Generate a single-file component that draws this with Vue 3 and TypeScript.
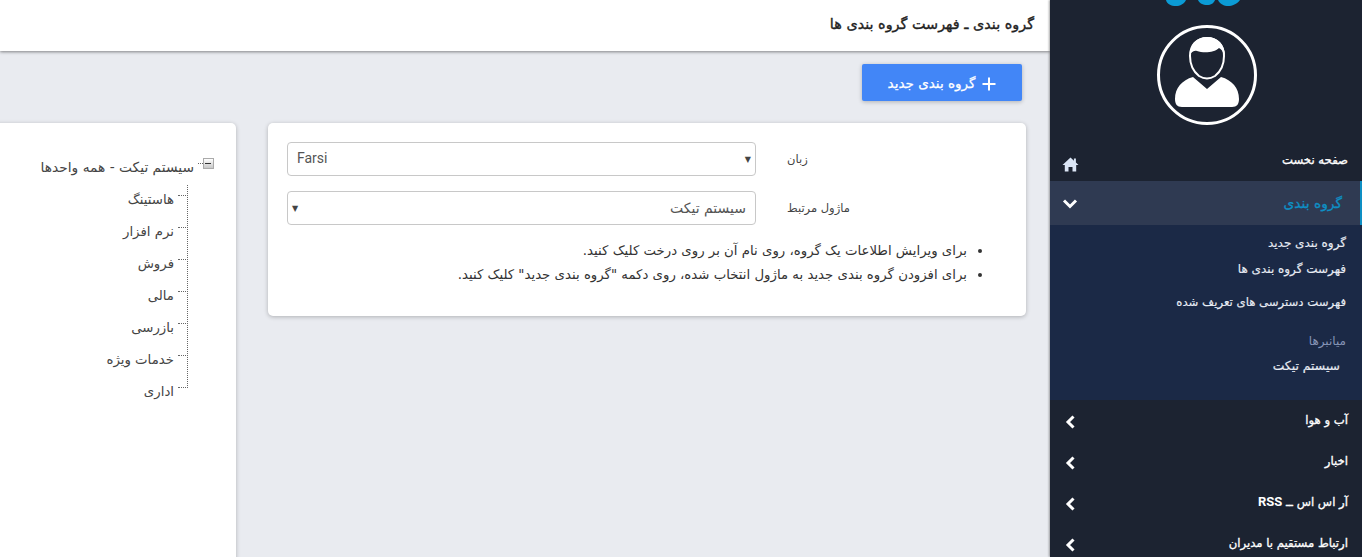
<script setup lang="ts">
const bullets = [
  'برای ویرایش اطلاعات یک گروه، روی نام آن بر روی درخت کلیک کنید.',
  'برای افزودن گروه بندی جدید به ماژول انتخاب شده، روی دکمه "گروه بندی جدید" کلیک کنید.'
]
const units = ['هاستینگ', 'نرم افزار', 'فروش', 'مالی', 'بازرسی', 'خدمات ویژه', 'اداری']
const menus = [
  { text: 'آب و هوا', latin: '' },
  { text: 'اخبار', latin: '' },
  { text: 'آر اس اس ــ ', latin: 'RSS' },
  { text: 'ارتباط مستقیم با مدیران', latin: '' }
]
</script>

<template>
  <div class="page">
    <main class="main">
      <header class="topbar">
        <h1>گروه بندی ـ فهرست گروه بندی ها</h1>
      </header>
      <div class="toolbar">
        <button class="add-btn" type="button">
          <svg width="14" height="14" viewBox="0 0 14 14"><path d="M7 0.5v13M0.5 7h13" stroke="#fff" stroke-width="2" /></svg>
          <span>گروه بندی جدید</span>
        </button>
      </div>
      <div class="cards">
        <section class="card form-card">
          <div class="field">
            <div class="select ltr"><span>Farsi</span></div>
            <label>زبان</label>
          </div>
          <div class="field">
            <div class="select"><span>سیستم تیکت</span></div>
            <label>ماژول مرتبط</label>
          </div>
          <ul class="hints">
            <li v-for="b in bullets" :key="b">{{ b }}</li>
          </ul>
        </section>
        <section class="card tree-card">
          <div class="tree-root">
            <span class="toggle"></span>
            <span class="root-dots"></span>
            <span class="root-label">سیستم تیکت - همه واحدها</span>
          </div>
          <ul class="tree">
            <li v-for="u in units" :key="u">{{ u }}</li>
          </ul>
        </section>
      </div>
    </main>

    <aside class="sidebar">
      <svg class="logo" width="110" height="25" viewBox="0 0 110 25">
        <path d="M6 0h20c-2 4-6 6-10 6-5 0-9-2-10-6z" fill="#0b9bd5" />
        <path d="M38 0h17c-1 3-4 5-8 5s-8-2-9-5z" fill="#0b9bd5" />
        <path d="M58 0h22c-3 4-8 6-12 6s-8-2-10-6z" fill="#0b9bd5" />
      </svg>
      <svg class="avatar" width="100" height="100" viewBox="0 0 100 100">
        <circle cx="50" cy="50" r="48.5" fill="none" stroke="#fff" stroke-width="3" />
        <path d="M50 13c-11 0-17 8-17 18 0 9 4 16 9 20 5 3 11 3 16 0 5-4 9-11 9-20 0-10-6-18-17-18z" fill="none" stroke="#fff" stroke-width="2" />
        <path d="M33 30C33 18 41 12 50 12c10 0 18 7 18 19-2-5-4-7-6-8-5 5-16 5-22 3-4-1-6 2-7 4z" fill="#fff" />
        <path d="M36 52l14 12 14-12c11 3 18 11 18 22 0 5-2 8-7 8H25c-5 0-7-3-7-8 0-11 7-19 18-22z" fill="#fff" />
      </svg>

      <nav class="menu">
        <a class="item home">
          <span class="label">صفحه نخست</span>
          <svg width="17" height="15" viewBox="0 0 17 15"><path d="M8.5 0.5L0.5 8h2.3v6.5h3.7v-4.5h4v4.5h3.7V8h2.3l-2.6-2.4V1.5h-2v2.2z" fill="#dbe6f6" /></svg>
        </a>
        <a class="item active">
          <span class="label">گروه بندی</span>
          <svg width="16" height="11" viewBox="0 0 16 11"><path d="M2 2.5l6 6 6-6" fill="none" stroke="#fff" stroke-width="3" /></svg>
        </a>
        <div class="submenu">
          <a class="sub">گروه بندی جدید</a>
          <a class="sub">فهرست گروه بندی ها</a>
          <a class="sub third">فهرست دسترسی های تعریف شده</a>
          <div class="sub-title">میانبرها</div>
          <a class="sub shortcut">سیستم تیکت</a>
        </div>
        <a v-for="m in menus" :key="m.text" class="item closed">
          <span class="label">{{ m.text }}<b v-if="m.latin">{{ m.latin }}</b></span>
          <svg width="10" height="14" viewBox="0 0 10 14"><path d="M8.5 1.5L3 7l5.5 5.5" fill="none" stroke="#fff" stroke-width="3" /></svg>
        </a>
      </nav>
    </aside>
  </div>
</template>

<style>
html,
body {
  margin: 0;
  height: 100%;
  overflow: hidden;
}
</style>

<style scoped>
.page {
  display: flex;
  width: 1362px;
  height: 557px;
  overflow: hidden;
  background: #e9ebf0;
  font-family: "DejaVu Sans", sans-serif;
  color: #333;
}
.main {
  width: 1050px;
  flex: none;
  display: flex;
  flex-direction: column;
}
.topbar {
  height: 51px;
  flex: none;
  background: #fff;
  box-shadow: 0 1px 3px rgba(0, 0, 0, 0.45);
  display: flex;
  align-items: center;
  direction: rtl;
  padding: 0 16px;
  box-sizing: border-box;
}
.topbar h1 {
  margin: 0 0 4px;
  font-size: 14.4px;
  font-weight: 400;
  -webkit-text-stroke: 0.35px #222;
  color: #222;
}
.toolbar {
  display: flex;
  justify-content: flex-end;
  padding: 13px 28px 0 0;
}
.add-btn {
  width: 160px;
  height: 37px;
  border: 0;
  border-radius: 2px;
  background: #4286f7;
  color: #fff;
  box-shadow: 0 1px 4px rgba(0, 0, 0, 0.25);
  display: flex;
  align-items: center;
  justify-content: center;
  gap: 7px;
  direction: rtl;
  font-family: inherit;
  font-size: 13.5px;
  -webkit-text-stroke: 0.25px #fff;
  padding: 0;
}
.add-btn svg {
  margin-top: 2px;
}
.cards {
  display: flex;
  flex-direction: row-reverse;
  align-items: flex-start;
  gap: 32px;
  padding: 22px 24px 0 0;
  margin-left: -30px;
}
.card {
  background: #fff;
  border-radius: 5px;
  box-shadow: 0 1px 4px rgba(0, 0, 0, 0.25);
  box-sizing: border-box;
}
.form-card {
  width: 758px;
  height: 193px;
  flex: none;
  padding: 19px 19px 0;
}
.field {
  display: flex;
  align-items: center;
  gap: 31px;
  height: 34px;
  margin-bottom: 15px;
}
.field label {
  direction: rtl;
  white-space: nowrap;
  font-size: 11.5px;
  color: #444;
}
.select {
  position: relative;
  width: 469px;
  height: 34px;
  flex: none;
  border: 1px solid #c8c8c8;
  border-radius: 4px;
  box-sizing: border-box;
  direction: rtl;
  padding: 0 9px;
  line-height: 32px;
  font-size: 14px;
  color: #555;
}
.select::after {
  content: "▼";
  position: absolute;
  left: 4px;
  top: 1px;
  font-family: "DejaVu Sans", sans-serif;
  font-size: 8px;
  color: #444;
}
.select.ltr {
  direction: ltr;
  font-family: Roboto, sans-serif;
  line-height: 30px;
}
.select.ltr::after {
  left: auto;
  right: 4px;
  line-height: 32px;
}
.hints {
  margin: -1px 0 0;
  padding: 0 40px 0 0;
  direction: rtl;
  list-style: disc;
  font-size: 13.3px;
  line-height: 24px;
  color: #333;
}
.tree-card {
  width: 266px;
  height: 480px;
  flex: none;
  direction: rtl;
  padding: 35px 22px 0 0;
  font-size: 13.3px;
  color: #444;
}
.tree-root {
  display: flex;
  align-items: flex-start;
  height: 27px;
}
.toggle {
  position: relative;
  width: 11px;
  height: 11px;
  flex: none;
  border: 1px solid #aaa;
  box-sizing: border-box;
  background: linear-gradient(#fff, #c8c8c8);
}
.toggle::after {
  content: "";
  position: absolute;
  left: 1px;
  right: 2px;
  top: 4px;
  height: 1px;
  background: #333;
}
.root-dots {
  width: 5px;
  margin-top: 5px;
  border-top: 1px dotted #666;
}
.root-label {
  margin: -1px 4px 0 0;
  font-size: 13.8px;
  line-height: 20px;
}
.tree {
  position: relative;
  list-style: none;
  margin: 0;
  padding: 0 40px 0 0;
}
.tree::before {
  content: "";
  position: absolute;
  right: 26px;
  top: 0;
  height: 203px;
  border-right: 1px dotted #666;
}
.tree li {
  position: relative;
  height: 32px;
  padding-top: 5px;
  box-sizing: border-box;
  line-height: 20px;
}
.tree li::before {
  content: "";
  position: absolute;
  right: -14px;
  top: 10px;
  width: 10px;
  border-top: 1px dotted #666;
}
.sidebar {
  position: relative;
  width: 312px;
  flex: none;
  background: #1c2331;
  box-shadow: -1px 0 2px rgba(0, 0, 0, 0.35);
  display: flex;
  flex-direction: column;
  direction: rtl;
  color: #fff;
}
.logo {
  flex: none;
  margin: 0 92px 0 110px;
}
.avatar {
  margin: 0 105px 0 107px;
  flex: none;
}
.menu {
  margin-top: 20px;
  display: flex;
  flex-direction: column;
}
.item {
  display: flex;
  align-items: center;
  justify-content: space-between;
  font-size: 11.7px;
  -webkit-text-stroke: 0.3px currentColor;
  padding: 0 14px 0 12px;
}
.item b {
  font-family: Roboto, sans-serif;
  font-size: 13px;
  font-weight: 700;
  -webkit-text-stroke: 0;
}
.home {
  height: 36px;
}
.home .label {
  margin-bottom: 6px;
}
.home svg {
  margin-top: 2px;
}
.active {
  height: 44px;
  background: #2f3a52;
  border-right: 2px solid #0e8fc4;
  padding-right: 18px;
  font-size: 13.8px;
  color: #0e8fc4;
}
.submenu {
  height: 175px;
  background: #1b2946;
  padding: 8px 16px 0 0;
  box-sizing: border-box;
  font-size: 12px;
  display: flex;
  flex-direction: column;
}
.sub {
  height: 26px;
  line-height: 20px;
  color: #e8ecf4;
  -webkit-text-stroke: 0.15px currentColor;
}
.third {
  margin-top: 7px;
  height: 39px;
  font-size: 11.7px;
}
.sub-title {
  height: 25px;
  line-height: 20px;
  color: #8694b6;
}
.shortcut {
  padding-right: 6px;
  font-size: 12.4px;
  -webkit-text-stroke: 0.2px currentColor;
}
.closed {
  height: 41px;
}
.closed .label {
  margin-bottom: 2px;
}
.closed svg {
  margin: 2px 0 0 3px;
}
</style>
